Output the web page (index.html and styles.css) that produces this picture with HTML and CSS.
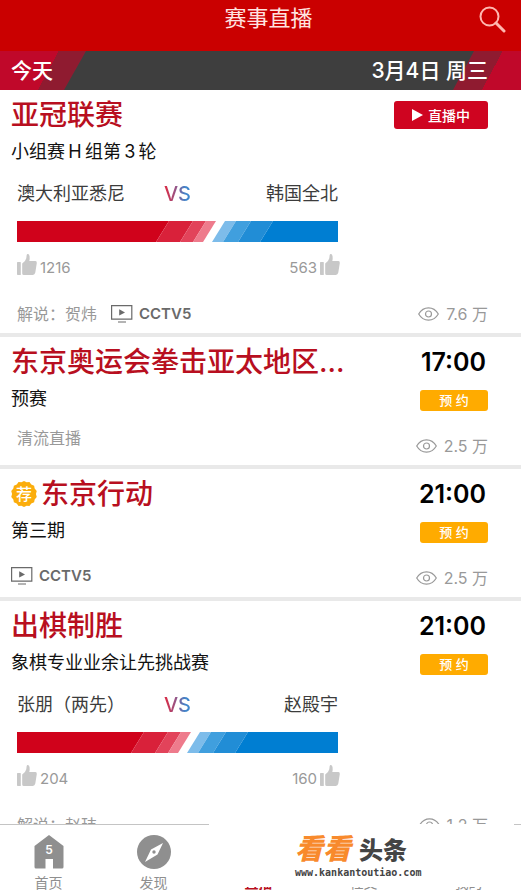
FILE: index.html
```html
<!DOCTYPE html>
<html lang="zh-CN">
<head>
<meta charset="utf-8">
<meta name="viewport" content="width=device-width, initial-scale=1">
<title>赛事直播</title>
<link rel="stylesheet" href="styles.css">
</head>
<body>
<svg class="defs" aria-hidden="true">
  <symbol id="thumb" viewBox="0 0 20 21">
    <path d="M0 8.5Q0 8 .6 8H3.2Q3.8 8 3.8 8.6V20.4Q3.8 21 3.2 21H.8Q0 21 0 20.2Z"/>
    <path d="M5.2 9.5Q8.6 7.2 9.3 4.2L9.6 1.4Q9.8 0 10.9 .1 12.4.4 12.6 2.4 12.9 4.8 12.3 7H18.4Q20 7.2 19.8 9L18.3 18.6Q17.8 20.9 15.8 21H7Q5.2 21 5.2 19.4Z"/>
  </symbol>
  <symbol id="eye" viewBox="0 0 21 14">
    <path d="M.7 7C3.2 2.7 6.6.8 10.5.8S17.800 2.700 20.300 7C17.800 11.300 14.400 13.200 10.500 13.200S3.200 11.300.7 7Z"/>
    <circle cx="10.500" cy="7" r="3"/>
  </symbol>
  <symbol id="tv" viewBox="0 0 22 18">
    <path fill="none" stroke="currentColor" stroke-width="1.200" d="M.6.6H20.800V14.200H.6ZM7 17H15"/>
    <path fill="currentColor" d="M8.200 4.200 14 7.400 8.200 10.600Z"/>
  </symbol>
  <symbol id="stripes" viewBox="0 0 118 21">
    <path fill="#d0021b" d="M0 0H14L1 21H0Z"/>
    <path fill="#d9213a" d="M14 0H38L25 21H1Z"/>
    <path fill="#e2435a" d="M38 0H51L38 21H25Z"/>
    <path fill="#ee7b8c" d="M51 0H61L48 21H38Z"/>
    <path fill="#7dbcea" d="M70 0H81L68 21H57Z"/>
    <path fill="#409fde" d="M81 0H96L83 21H68Z"/>
    <path fill="#218dd6" d="M96 0H118L105 21H83Z"/>
    <path fill="#007ed2" d="M118 0V21H105Z"/>
  </symbol>
</svg>

<div class="app">
  <header class="topbar">
    <h1 class="topbar-title">赛事直播</h1>
    <button class="search" type="button" aria-label="搜索">
      <svg width="27" height="27" viewBox="0 0 27 27"><circle cx="10.500" cy="10.500" r="9" fill="none" stroke="currentColor" stroke-width="2"/><path d="M17 17 25 25" stroke="currentColor" stroke-width="3" stroke-linecap="round"/></svg>
    </button>
  </header>

  <div class="datebar">
    <span>今天</span>
    <time datetime="03-04">3月4日 周三</time>
  </div>

  <main class="list">
    <article class="card">
      <div class="card-main">
        <h2 class="card-title">亚冠联赛</h2>
        <p class="card-sub">小组赛&thinsp;H&thinsp;组第&thinsp;3&thinsp;轮</p>
        <div class="match">
          <div class="teams"><span>澳大利亚悉尼</span><b class="vs">VS</b><span class="away">韩国全北</span></div>
          <div class="bar"><i class="bar-red" style="flex-grow:138"></i><svg class="bar-mid"><use href="#stripes"/></svg><i class="bar-blue" style="flex-grow:65"></i></div>
          <div class="likes">
            <button class="like" type="button"><svg class="thumb"><use href="#thumb"/></svg>1216</button>
            <button class="like" type="button">563<svg class="thumb"><use href="#thumb"/></svg></button>
          </div>
        </div>
        <div class="meta meta-match"><span>解说：贺炜</span><span class="channel"><svg class="tv"><use href="#tv"/></svg>CCTV5</span></div>
      </div>
      <div class="card-side">
        <button class="live" type="button"><svg width="11" height="12" viewBox="0 0 11 12"><path fill="currentColor" d="M0 0 11 6 0 12Z"/></svg>直播中</button>
        <span class="views"><svg class="eye"><use href="#eye"/></svg>7.6 万</span>
      </div>
    </article>

    <article class="card">
      <div class="card-main">
        <h2 class="card-title">东京奥运会拳击亚太地区...</h2>
        <p class="card-sub">预赛</p>
        <div class="meta meta-indent">清流直播</div>
      </div>
      <div class="card-side">
        <time class="clock">17:00</time>
        <button class="reserve" type="button">预 约</button>
        <span class="views"><svg class="eye"><use href="#eye"/></svg>2.5 万</span>
      </div>
    </article>

    <article class="card">
      <div class="card-main">
        <h2 class="card-title"><span class="pick">荐</span>东京行动</h2>
        <p class="card-sub">第三期</p>
        <div class="meta"><span class="channel"><svg class="tv"><use href="#tv"/></svg>CCTV5</span></div>
      </div>
      <div class="card-side">
        <time class="clock">21:00</time>
        <button class="reserve" type="button">预 约</button>
        <span class="views"><svg class="eye"><use href="#eye"/></svg>2.5 万</span>
      </div>
    </article>

    <article class="card">
      <div class="card-main">
        <h2 class="card-title">出棋制胜</h2>
        <p class="card-sub">象棋专业业余让先挑战赛</p>
        <div class="match">
          <div class="teams"><span>张朋（两先）</span><b class="vs">VS</b><span class="away">赵殿宇</span></div>
          <div class="bar"><i class="bar-red" style="flex-grow:113"></i><svg class="bar-mid"><use href="#stripes"/></svg><i class="bar-blue" style="flex-grow:90"></i></div>
          <div class="likes">
            <button class="like" type="button"><svg class="thumb"><use href="#thumb"/></svg>204</button>
            <button class="like" type="button">160<svg class="thumb"><use href="#thumb"/></svg></button>
          </div>
        </div>
        <div class="meta meta-match"><span>解说：赵玮</span></div>
      </div>
      <div class="card-side">
        <time class="clock">21:00</time>
        <button class="reserve" type="button">预 约</button>
        <span class="views"><svg class="eye"><use href="#eye"/></svg>1.2 万</span>
      </div>
    </article>
  </main>

  <nav class="tabbar">
    <div class="tabs">
      <a class="tab" href="#home"><svg width="30" height="34" viewBox="0 0 30 34"><path fill="currentColor" d="M15 0 29.500 11V32Q29.500 33.500 28 33.500H19V24H11.500V33.500H2Q.5 33.500.5 32V11Z"/><text class="home-num" x="15" y="19" text-anchor="middle">5</text></svg>首页</a>
      <a class="tab" href="#find"><svg width="34" height="34" viewBox="0 0 34 34"><circle cx="17" cy="17" r="17" fill="currentColor"/><path fill="#fff" fill-rule="evenodd" d="M26 8 20.500 19.500 8 27 14 14.500ZM17 15.300A1.700 1.700 0 1 0 17 18.700 1.700 1.700 0 1 0 17 15.300Z"/></svg>发现</a>
      <a class="tab tab-on" href="#live">直播</a>
      <a class="tab" href="#social">社交</a>
      <a class="tab" href="#me">我的</a>
    </div>
    <div class="brand">
      <div class="brand-name"><span class="brand-hot">看看</span><span>头条</span></div>
      <div class="brand-url">www.kankantoutiao.com</div>
    </div>
  </nav>
</div>
</body>
</html>
```
FILE: styles.css
```css
* { box-sizing: border-box; }

body {
  margin: 0;
  background: #fff;
  color: #111;
  font-family: Inter, "Noto Sans CJK SC", sans-serif;
}

h1, h2, p { margin: 0; }

button {
  padding: 0;
  border: 0;
  background: none;
  color: inherit;
  font: inherit;
}

.defs { position: absolute; width: 0; height: 0; }

.app {
  display: flex;
  flex-direction: column;
  height: 100vh;
}

/* header */
.topbar {
  display: grid;
  grid-template-columns: 1fr auto 1fr;
  height: 51px;
  padding: 0 15px 16px 31px;
  align-items: center;
  background: #ca0000;
  color: #ffe4e0;
}
.topbar-title {
  grid-column: 2;
  font-size: 22px;
  line-height: 34px;
  font-weight: 400;
}
.search {
  display: flex;
  justify-self: end;
  padding-top: 4px;
  color: #ffb8b0;
}

.datebar {
  position: relative;
  display: flex;
  justify-content: space-between;
  align-items: center;
  height: 39px;
  padding: 0 33px 3px 11px;
  overflow: hidden;
  background: #3e3e3e;
  color: #fff;
  font-size: 21px;
  font-weight: 500;
}
.datebar > * { position: relative; z-index: 1; }
.datebar::before,
.datebar::after {
  content: "";
  position: absolute;
  top: 0;
  height: 100%;
}
.datebar::before {
  left: 0;
  width: 86px;
  background: linear-gradient(118deg, #c0082a 0 55%, #8f1b30 55%);
  clip-path: polygon(0 0, 100% 0, 64px 100%, 0 100%);
}
.datebar::after {
  right: 0;
  width: 68px;
  background: linear-gradient(118deg, #8f1b30 0 56%, #c0082a 56%);
  clip-path: polygon(21px 0, 100% 0, 100% 100%, 0 100%);
}

/* cards */
.list {
  flex: 1;
  min-height: 0;
  overflow: hidden;
}
.card {
  display: grid;
  grid-template-columns: 1fr 94px;
  min-height: 132px;
  padding: 8px 33px 8px 11px;
  border-bottom: 4px solid #e9e9e9;
}
.card-main { min-width: 0; }
.card-title {
  display: flex;
  align-items: center;
  height: 34px;
  color: #b80f20;
  font-size: 28px;
  line-height: 34px;
  font-weight: 500;
  white-space: nowrap;
}
.card-sub {
  margin-top: 6px;
  font-size: 18px;
  line-height: 28px;
}
.pick {
  display: grid;
  place-items: center;
  width: 26px;
  height: 26px;
  margin-right: 4px;
  background: #fbad0c;
  clip-path: polygon(50% 0, 60% 5%, 71% 4%, 78% 13%, 89% 18%, 91% 29%, 99% 38%, 96% 50%, 99% 62%, 91% 71%, 89% 82%, 78% 87%, 71% 96%, 60% 95%, 50% 100%, 40% 95%, 29% 96%, 22% 87%, 11% 82%, 9% 71%, 1% 62%, 4% 50%, 1% 38%, 9% 29%, 11% 18%, 22% 13%, 29% 4%, 40% 5%);
  color: #fff;
  font-size: 16px;
  line-height: 26px;
}

.match { margin: 14px 56px 0 6px; }
.teams {
  display: grid;
  grid-template-columns: 1fr auto 1fr;
  align-items: center;
  color: #3c3c3c;
  font-size: 18px;
  line-height: 28px;
}
.away { text-align: right; }
.vs {
  background: linear-gradient(90deg, #d22f4c 10%, #8a5c92 50%, #3f86cc 80%);
  background-clip: text;
  color: transparent;
  font-size: 20px;
  font-weight: 500;
}
.bar {
  display: flex;
  height: 21px;
  margin-top: 13px;
}
.bar-red { flex: 1 1 0; background: #d0021b; }
.bar-blue { flex: 1 1 0; background: #007ed2; }
.bar-mid { flex: none; width: 118px; height: 21px; }

.likes {
  display: flex;
  justify-content: space-between;
  margin: 12px -2px 0 0;
}
.like {
  display: flex;
  gap: 3px;
  height: 21px;
  color: #999;
  font-size: 15px;
  line-height: 28px;
}
.thumb { width: 20px; height: 21px; fill: #c8c8c8; }

.meta {
  display: flex;
  align-items: center;
  gap: 14px;
  margin-top: 20px;
  color: #999;
  font-size: 16px;
  line-height: 22px;
}
.meta-match { margin: 28px 0 0 6px; }
.meta-indent { margin: 14px 0 0 6px; }
.channel {
  display: flex;
  align-items: center;
  gap: 6px;
  color: #6a6a6a;
  font-size: 15px;
  font-weight: 600;
}
.tv { width: 22px; height: 18px; }

.card-side {
  display: flex;
  flex-direction: column;
  align-items: flex-end;
}
.live {
  display: flex;
  justify-content: center;
  align-items: center;
  gap: 5px;
  width: 94px;
  height: 28px;
  margin-top: 3px;
  border-radius: 3px;
  background: #cf0420;
  color: #fff;
  font-size: 14px;
  font-weight: 500;
}
.clock {
  padding-right: 2px;
  color: #000;
  font-size: 25px;
  line-height: 34px;
  font-weight: 600;
}
.reserve {
  width: 68px;
  height: 21px;
  margin-top: 11px;
  border-radius: 3px;
  background: #ffab00;
  color: #fff;
  font-size: 13px;
  line-height: 21px;
  font-weight: 500;
}
.views {
  display: flex;
  align-items: center;
  gap: 7px;
  margin-top: auto;
  color: #999;
  font-size: 16px;
  line-height: 22px;
}
.eye {
  width: 21px;
  height: 14px;
  fill: none;
  stroke: #999;
  stroke-width: 1.2;
}

/* bottom tabs */
.tabbar {
  position: relative;
  flex: none;
  height: 70px;
  border-top: 1px solid #c4c4c4;
}
.tabs {
  display: grid;
  grid-template-columns: repeat(5, 1fr);
  height: 100%;
  margin-left: -4px;
}
.tab {
  display: flex;
  flex-direction: column;
  align-items: center;
  justify-content: flex-end;
  gap: 4px;
  padding-bottom: 1px;
  color: #8f8f8f;
  font-size: 14px;
  line-height: 20px;
  text-decoration: none;
}
.tab-on { color: #b80f20; font-weight: 700; }
.home-num { fill: #fff; font-size: 12px; font-weight: 600; }

/* brand plate lying over the tabs */
.brand {
  position: absolute;
  inset: -1px 7px 7px 209px;
  padding: 9px 0 0 86px;
  background: #fff;
  color: #444;
}
.brand-name {
  display: flex;
  align-items: baseline;
  gap: 8px;
  font-size: 24px;
  line-height: 32px;
  font-weight: 900;
}
.brand-hot { color: #f88a2c; font-size: 28px; font-style: italic; }
.brand-url {
  font-family: "DejaVu Sans Mono", monospace;
  font-size: 10px;
  line-height: 12px;
  font-weight: 700;
}
```
